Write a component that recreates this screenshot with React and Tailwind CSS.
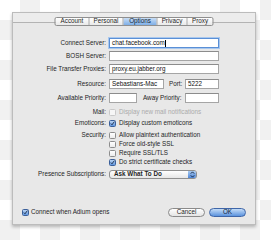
import React from 'react';

const FONT = { fontFamily: '"Liberation Sans", Arial, sans-serif' };

const TABS = ['Account', 'Personal', 'Options', 'Privacy', 'Proxy'];

const Check = ({ checked, disabled }) => (
  <span
    className={
      'w-[7px] h-[7px] shrink-0 rounded-[1.5px] border flex items-center justify-center ' +
      (checked
        ? 'border-[#3a5f9a] bg-gradient-to-b from-[#b9d3f3] to-[#5f95dd]'
        : disabled
        ? 'border-[#c9c9c9] bg-[#f6f6f6]'
        : 'border-[#8d8d8d] bg-gradient-to-b from-white to-[#ececec]')
    }
  >
    {checked && (
      <svg width="7" height="7" viewBox="0 0 7 7">
        <path d="M1.2 3.6 L2.8 5.3 L6.2 0.8" stroke="#1b2a44" strokeWidth="1.3" fill="none" />
      </svg>
    )}
  </span>
);

const Field = ({ w, text, focus }) => (
  <div
    className={
      'h-[10px] bg-white flex items-center px-[2px] text-[#111] ' +
      (focus
        ? 'border border-[#5a8fd6] shadow-[0_0_0_1px_#a9c8ee]'
        : 'border border-[#a5a5a5] border-t-[#8c8c8c]')
    }
    style={{ width: w }}
  >
    {text}
    {focus && <span className="w-px h-[7px] bg-black" />}
  </div>
);

const Label = ({ children }) => (
  <div className="w-[96px] shrink-0 text-right pr-[3px] text-[#1e1e1e]">{children}</div>
);

const CheckRow = ({ checked, disabled, children, label }) => (
  <div className="h-[9px] flex items-center">
    <Label>{label}</Label>
    <Check checked={checked} disabled={disabled} />
    <span className={'ml-[3px] ' + (disabled ? 'text-[#ababab]' : 'text-[#1e1e1e]')}>{children}</span>
  </div>
);

export default function App() {
  return (
    <div
      className="w-[271px] h-[240px] overflow-hidden pt-[12px] pl-[12px] bg-[repeating-conic-gradient(#f1f1f1_0_25%,#ffffff_0_50%)] bg-[length:40px_40px] text-[6.3px] leading-none"
      style={FONT}
    >
      <div className="w-[244px] h-[213px] bg-[#e8e8e8] border border-[#bcbcbc] shadow-[0_2px_3px_rgba(0,0,0,0.25)] flex flex-col">
        <div className="h-[10px] shrink-0 bg-[#ececec] border-b border-[#b3b3b3] relative">
          <div className="absolute left-1/2 -translate-x-1/2 top-[4px] h-[9px] flex rounded-[2px] border border-[#8f8f8f] bg-gradient-to-b from-white to-[#e9e9e9] overflow-hidden">
            {TABS.map((t, i) => (
              <div
                key={t}
                className={
                  'h-full flex items-center justify-center ' +
                  (i > 0 ? 'border-l border-[#a9a9a9] ' : '') +
                  (t === 'Options'
                    ? 'bg-gradient-to-b from-[#c9def6] to-[#7eaee6] text-[#0c1c33]'
                    : 'text-[#1e1e1e]')
                }
                style={{ width: [33, 34, 34, 30, 26][i] }}
              >
                {t}
              </div>
            ))}
          </div>
        </div>

        <div className="flex flex-col pt-[15px]">
          <div className="flex items-center">
            <Label>Connect Server:</Label>
            <Field w={110} text="chat.facebook.com" focus />
          </div>
          <div className="flex items-center mt-[3px]">
            <Label>BOSH Server:</Label>
            <Field w={110} />
          </div>
          <div className="flex items-center mt-[3px]">
            <Label>File Transfer Proxies:</Label>
            <Field w={110} text="proxy.eu.jabber.org" />
          </div>
          <div className="flex items-center mt-[5px]">
            <Label>Resource:</Label>
            <Field w={55} text="Sebastians-Mac" />
            <span className="ml-[5px] w-[16px] text-[#1e1e1e]">Port:</span>
            <Field w={34} text="5222" />
          </div>
          <div className="flex items-center mt-[4px]">
            <Label>Available Priority:</Label>
            <Field w={28} />
            <span className="ml-[6px] w-[42px] text-[#1e1e1e]">Away Priority:</span>
            <Field w={34} />
          </div>

          <div className="mt-[5px]">
            <CheckRow label="Mail:" disabled>Display new mail notifications</CheckRow>
          </div>
          <div className="mt-[2px]">
            <CheckRow label="Emoticons:" checked>Display custom emoticons</CheckRow>
          </div>
          <div className="mt-[3px] flex flex-col">
            <CheckRow label="Security:">Allow plaintext authentication</CheckRow>
            <CheckRow>Force old-style SSL</CheckRow>
            <CheckRow>Require SSL/TLS</CheckRow>
            <CheckRow checked>Do strict certificate checks</CheckRow>
          </div>

          <div className="flex items-center mt-[3px]">
            <Label>Presence Subscriptions:</Label>
            <div className="w-[88px] h-[9px] rounded-[3px] border border-[#8f8f8f] bg-gradient-to-b from-white to-[#e6e6e6] flex items-center">
              <span className="flex-1 pl-[4px] font-bold text-[#1e1e1e]">Ask What To Do</span>
              <span className="w-[8px] h-full rounded-r-[2px] bg-gradient-to-b from-[#aacbf1] to-[#4f86d6] flex items-center justify-center">
                <svg width="5" height="7" viewBox="0 0 5 7">
                  <path d="M0.8 2.6 L2.5 0.9 L4.2 2.6 M0.8 4.4 L2.5 6.1 L4.2 4.4" stroke="#0d1f3c" strokeWidth="0.9" fill="none" />
                </svg>
              </span>
            </div>
          </div>
        </div>

        <div className="mt-auto mb-[7px] flex items-center pl-[9px] pr-[9px]">
          <Check checked />
          <span className="ml-[2px] text-[#1e1e1e]">Connect when Adium opens</span>
          <div className="ml-auto flex gap-[4px]">
            <div className="w-[37px] h-[9px] rounded-full border border-[#8a8a8a] bg-gradient-to-b from-white to-[#e4e4e4] flex items-center justify-center text-[#1e1e1e]">
              Cancel
            </div>
            <div className="w-[37px] h-[9px] rounded-full border border-[#3f66a8] bg-gradient-to-b from-[#c4dcf7] to-[#5b93dd] flex items-center justify-center text-[#0c1c33]">
              OK
            </div>
          </div>
        </div>
      </div>
    </div>
  );
}
